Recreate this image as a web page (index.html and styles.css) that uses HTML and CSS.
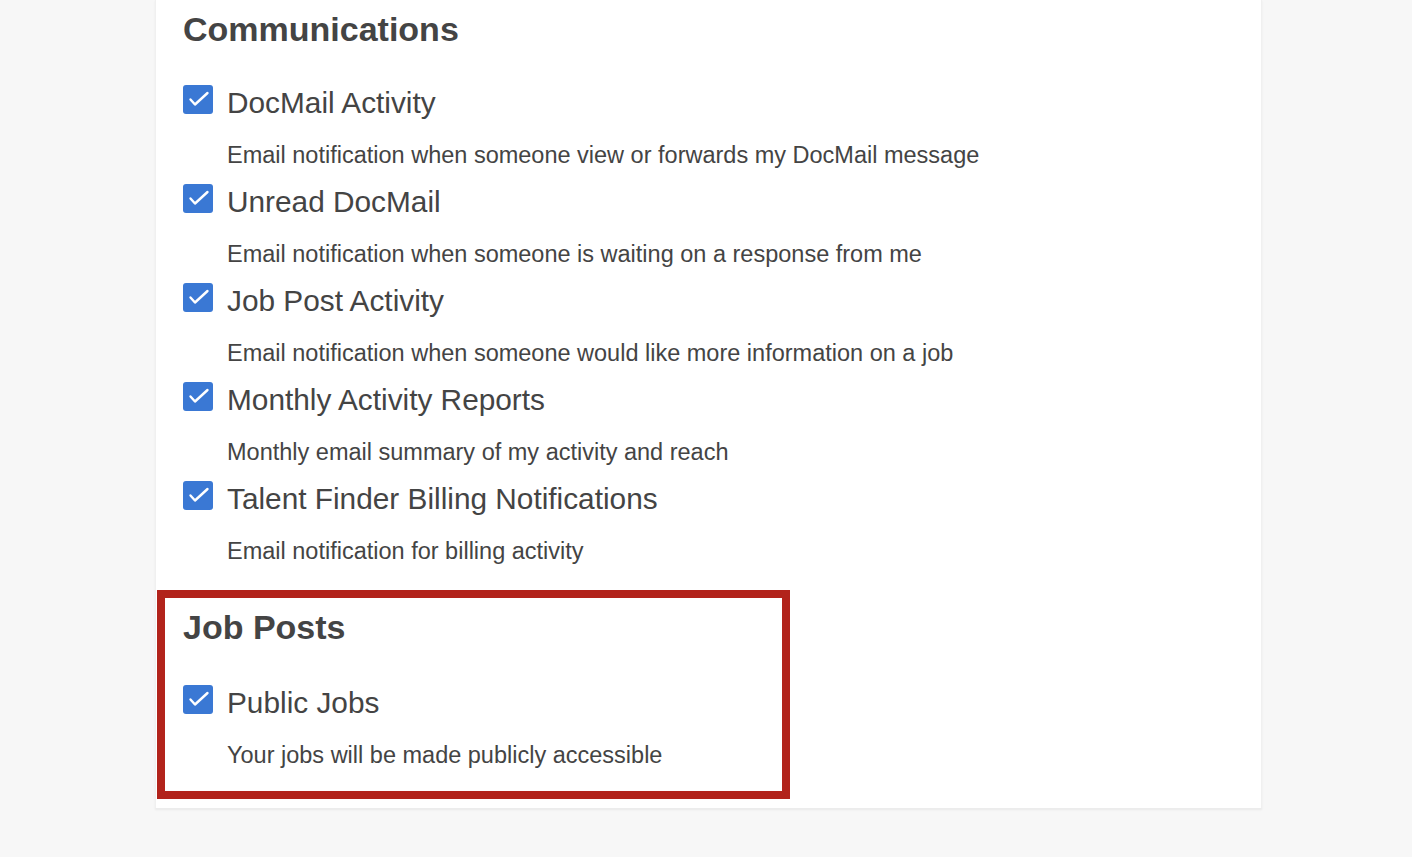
FILE: index.html
```html
<!DOCTYPE html>
<html>
<head>
<meta charset="utf-8">
<link rel="stylesheet" href="styles.css">
</head>
<body>
<div class="page">
  <div class="card">
    <section class="group">
      <h2 class="group-title">Communications</h2>
      <div class="option">
        <div class="option-row"><span class="check"><svg viewBox="0 0 30 29" width="30" height="29"><path d="M7.5 14.5 L12 19.5 L24.5 8" fill="none" stroke="#fff" stroke-width="2.4" stroke-linecap="round" stroke-linejoin="round"/></svg></span><span class="label">DocMail Activity</span></div>
        <p class="desc">Email notification when someone view or forwards my DocMail message</p>
      </div>
      <div class="option">
        <div class="option-row"><span class="check"><svg viewBox="0 0 30 29" width="30" height="29"><path d="M7.5 14.5 L12 19.5 L24.5 8" fill="none" stroke="#fff" stroke-width="2.4" stroke-linecap="round" stroke-linejoin="round"/></svg></span><span class="label">Unread DocMail</span></div>
        <p class="desc">Email notification when someone is waiting on a response from me</p>
      </div>
      <div class="option">
        <div class="option-row"><span class="check"><svg viewBox="0 0 30 29" width="30" height="29"><path d="M7.5 14.5 L12 19.5 L24.5 8" fill="none" stroke="#fff" stroke-width="2.4" stroke-linecap="round" stroke-linejoin="round"/></svg></span><span class="label">Job Post Activity</span></div>
        <p class="desc">Email notification when someone would like more information on a job</p>
      </div>
      <div class="option">
        <div class="option-row"><span class="check"><svg viewBox="0 0 30 29" width="30" height="29"><path d="M7.5 14.5 L12 19.5 L24.5 8" fill="none" stroke="#fff" stroke-width="2.4" stroke-linecap="round" stroke-linejoin="round"/></svg></span><span class="label">Monthly Activity Reports</span></div>
        <p class="desc">Monthly email summary of my activity and reach</p>
      </div>
      <div class="option">
        <div class="option-row"><span class="check"><svg viewBox="0 0 30 29" width="30" height="29"><path d="M7.5 14.5 L12 19.5 L24.5 8" fill="none" stroke="#fff" stroke-width="2.4" stroke-linecap="round" stroke-linejoin="round"/></svg></span><span class="label">Talent Finder Billing Notifications</span></div>
        <p class="desc">Email notification for billing activity</p>
      </div>
    </section>
    <section class="group group-highlight">
      <h2 class="group-title">Job Posts</h2>
      <div class="option">
        <div class="option-row"><span class="check"><svg viewBox="0 0 30 29" width="30" height="29"><path d="M7.5 14.5 L12 19.5 L24.5 8" fill="none" stroke="#fff" stroke-width="2.4" stroke-linecap="round" stroke-linejoin="round"/></svg></span><span class="label">Public Jobs</span></div>
        <p class="desc">Your jobs will be made publicly accessible</p>
      </div>
    </section>
  </div>
</div>
</body>
</html>
```

FILE: styles.css
```css
html, body {
  margin: 0;
  padding: 0;
  background: #ffffff;
}
body {
  font-family: "Liberation Sans", Arial, sans-serif;
  color: #444444;
}
.page {
  background: #f7f7f7;
  height: 857px;
  overflow: hidden;
}
.card {
  margin-left: 155px;
  width: 1107px;
  background: #ffffff;
  box-shadow: 0 1px 2px rgba(0,0,0,0.06);
  border-left: 1px solid #f0f0f0;
  border-right: 1px solid #f0f0f0;
  border-bottom: 1px solid #ececec;
  box-sizing: border-box;
  padding: 0 0 9px 1px;
}
.group {
  padding: 9px 0 12px 26px;
}
.group-highlight {
  width: 633px;
  box-sizing: border-box;
  border: 8px solid #b2231b;
  padding: 9px 0 9px 18px;
}
.group-title {
  margin: 0 0 34px 0;
  font-size: 34px;
  line-height: 40px;
  font-weight: bold;
  color: #444444;
}
.group-highlight .group-title {
  margin-bottom: 36px;
}
.option {
  display: flex;
  flex-direction: column;
}
.option-row {
  display: flex;
  align-items: center;
  gap: 14px;
  height: 38px;
}
.check {
  width: 30px;
  height: 29px;
  border-radius: 3px;
  background: #3a78d4;
  display: flex;
  flex-shrink: 0;
  margin-bottom: 6px;
}
.label {
  font-size: 29.8px;
  color: #444444;
  margin-top: 2px;
}
.desc {
  margin: 20px 0 13px 44px;
  font-size: 23.5px;
  line-height: 28px;
  color: #444444;
}
```
